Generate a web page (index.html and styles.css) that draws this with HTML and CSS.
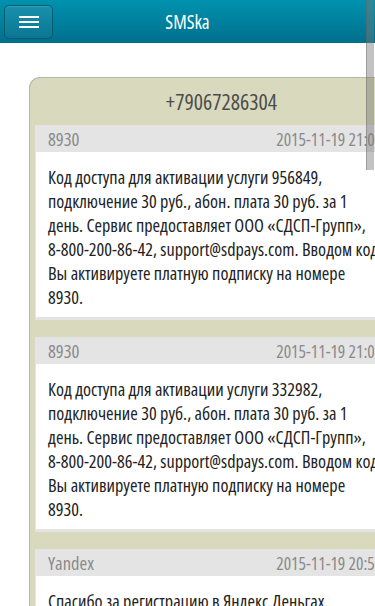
FILE: index.html
```html
<!DOCTYPE html>
<html lang="ru">
<head>
<meta charset="utf-8">
<title>SMSka</title>
<link rel="stylesheet" href="styles.css">
</head>
<body>
<header class="topbar">
  <button class="menu-btn" aria-label="Меню">
    <span class="bar"></span><span class="bar"></span><span class="bar"></span>
  </button>
  <h1 class="title">SMSka</h1>
</header>
<main class="content">
  <section class="thread">
    <h2 class="thread-head">+79067286304</h2>
    <div class="messages">
      <article class="msg">
        <div class="msg-head"><span class="sender">8930</span><span class="date">2015-11-19 21:00:38</span></div>
        <p class="msg-body">Код доступа для активации услуги 956849,<br>подключение 30 руб., абон. плата 30 руб. за 1<br>день. Сервис предоставляет ООО «СДСП-Групп»,<br>8-800-200-86-42, support@sdpays.com. Вводом кода<br>Вы активируете платную подписку на номере<br>8930.</p>
      </article>
      <article class="msg">
        <div class="msg-head"><span class="sender">8930</span><span class="date">2015-11-19 21:00:12</span></div>
        <p class="msg-body">Код доступа для активации услуги 332982,<br>подключение 30 руб., абон. плата 30 руб. за 1<br>день. Сервис предоставляет ООО «СДСП-Групп»,<br>8-800-200-86-42, support@sdpays.com. Вводом кода<br>Вы активируете платную подписку на номере<br>8930.</p>
      </article>
      <article class="msg">
        <div class="msg-head"><span class="sender">Yandex</span><span class="date">2015-11-19 20:52:41</span></div>
        <p class="msg-body">Спасибо за регистрацию в Яндекс.Деньгах.<br>Ваш номер кошелька будет указан в письме.</p>
      </article>
    </div>
  </section>
</main>
<div class="scroll-thumb"></div>
</body>
</html>
```
FILE: styles.css
```css
html, body {
  margin: 0;
  padding: 0;
  height: 100%;
  overflow: hidden;
  background: #ffffff;
}
body {
  font-family: "Open Sans", "DejaVu Sans", sans-serif;
  font-stretch: 75%;
  position: relative;
}
.topbar {
  height: 43px;
  background: linear-gradient(#0092af, #006f8c);
  display: flex;
  align-items: center;
  position: relative;
}
.menu-btn {
  margin-left: 4px;
  width: 49px;
  height: 34px;
  border: 1px solid #0a5a72;
  border-radius: 5px;
  background: linear-gradient(#1791ad, #0b7692);
  display: flex;
  flex-direction: column;
  align-items: center;
  justify-content: center;
  gap: 3px;
  padding: 0;
  box-shadow: inset 0 1px 0 rgba(255,255,255,0.12);
}
.menu-btn .bar {
  display: block;
  width: 20px;
  height: 2px;
  background: #ffffff;
}
.title {
  flex: 1;
  margin: 0 0 0 -53px;
  text-align: center;
  color: #ffffff;
  font-size: 19px;
  font-weight: normal;
}
.content {
  padding: 34px 0 0 29px;
  width: 384px;
}
.thread {
  background: #d9d9bd;
  border: 1px solid #b7b7a8;
  border-radius: 11px 11px 0 0;
  border-right: none;
}
.thread-head {
  margin: 0;
  height: 47px;
  line-height: 47px;
  text-align: center;
  font-size: 21.8px;
  font-weight: normal;
  color: #4d4d4d;
}
.messages {
  padding: 0 0 0 5px;
  display: flex;
  flex-direction: column;
  gap: 17px;
}
.msg {
  background: #e4e4e4;
  padding: 0 0 3px 1px;
}
.msg-head {
  height: 27px;
  display: flex;
  justify-content: space-between;
  align-items: center;
  padding: 0 0 0 12px;
  color: #8a8a8a;
  font-size: 18.5px;
  white-space: nowrap;
}
.date {
  font-size: 17.5px;
  margin-right: 12px;
}
.msg-body {
  margin: 0;
  background: #ffffff;
  padding: 13px 0 8px 12px;
  font-size: 18.2px;
  line-height: 24px;
  color: #222222;
  white-space: nowrap;
}
.scroll-thumb {
  position: absolute;
  top: 0;
  right: 1px;
  width: 7px;
  height: 170px;
  background: rgba(120, 120, 120, 0.45);
  border-left: 1px solid rgba(90, 90, 90, 0.35);
}
```
